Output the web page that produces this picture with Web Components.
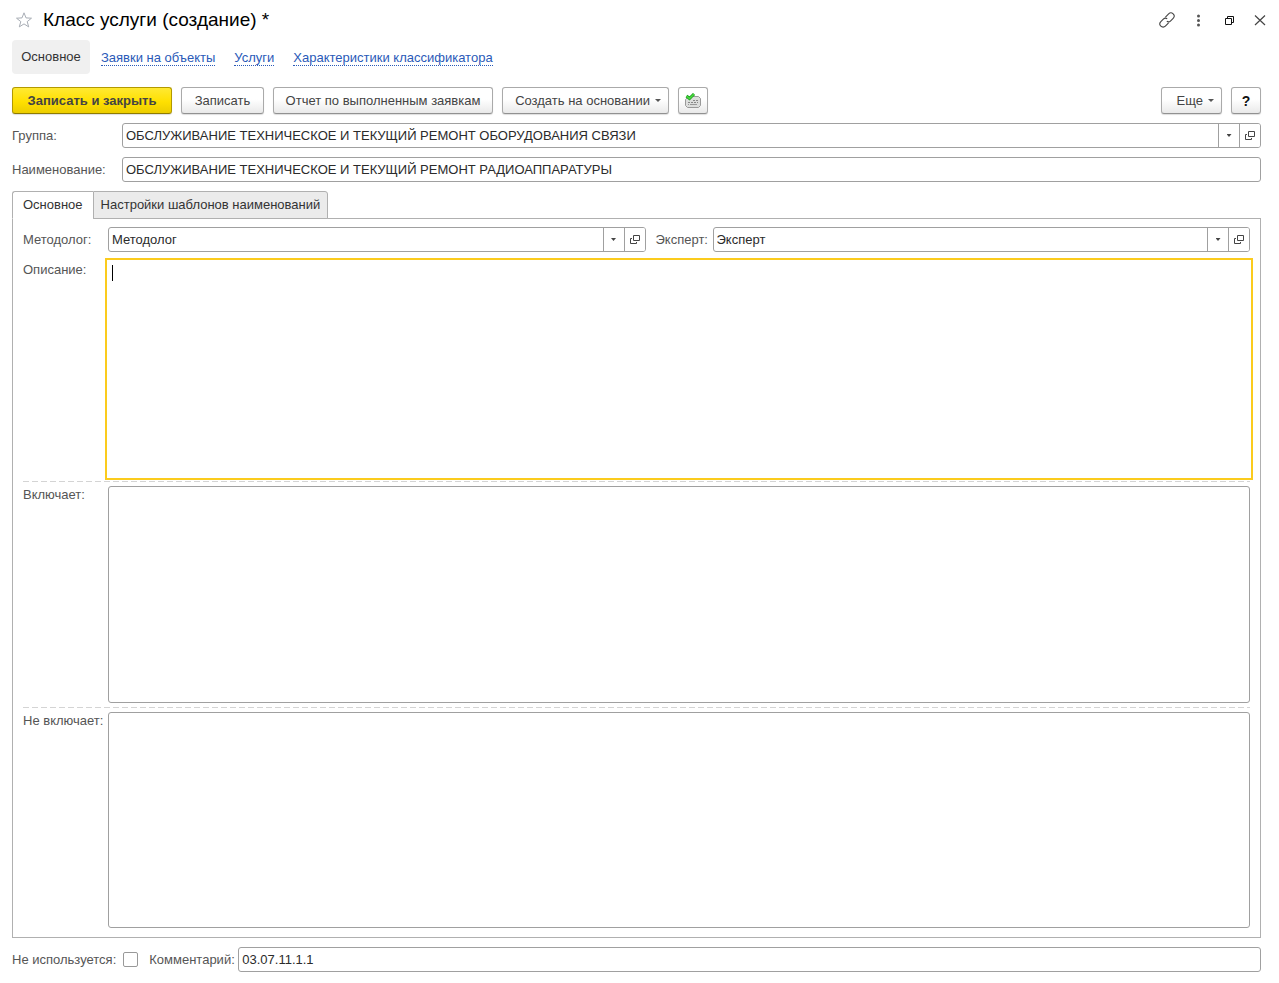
<!DOCTYPE html>
<html lang="ru">
<head>
<meta charset="utf-8">
<meta name="viewport" content="width=device-width, initial-scale=1">
<title>Класс услуги (создание)</title>
<style>
  html, body { margin: 0; background: #fff; }
  body { font: 13px/16px "Liberation Sans", Arial, sans-serif; color: #333; }
</style>
</head>
<body>
<service-form></service-form>
<script>
const base = `:host, *, *::before, *::after { box-sizing: border-box; }
  button, input, textarea { font: inherit; color: inherit; margin: 0; }`;

function define(name, html, setup) {
  const template = document.createElement('template');
  template.innerHTML = html;
  customElements.define(name, class extends HTMLElement {
    constructor() {
      super();
      this.attachShadow({ mode: 'open' }).append(template.content.cloneNode(true));
    }
    connectedCallback() { if (setup) setup(this, this.shadowRoot); }
  });
}

define('window-header', `<style>${base}
  :host { display: flex; align-items: center; height: 40px; padding-left: 4px; }
  h1 { flex: 1; margin: 0 0 0 11px; font-size: 19px; line-height: 24px; font-weight: 400; color: #000; }
  button { display: grid; place-items: center; width: 16px; height: 16px; padding: 0; border: 0; background: none; color: #444; }
  .favourite { color: #a8adb5; }
  svg { display: block; fill: none; stroke: currentColor; }
  .tools { display: flex; gap: 15px; margin-right: -7px; }
</style>
<button class="favourite" aria-label="В избранное"><svg width="16" height="16" viewBox="0 0 16 16"><path d="M8 .8l2 5.1 5.500.3-4.300 3.400 1.500 5.300L8 11.900l-4.700 3 1.500-5.300L.5 6.200 6 5.900z"/></svg></button>
<h1><slot></slot></h1>
<div class="tools">
  <button aria-label="Получить ссылку"><svg width="16" height="16" viewBox="0 0 16 16"><g transform="rotate(-45 8 8)" stroke-width="1.1"><path d="M7 11.200H2.500a3.200 3.200 0 0 1 0-6.400H6a3.200 3.200 0 0 1 3.100 2.400M9 4.800h4.500a3.200 3.200 0 0 1 0 6.400H10a3.200 3.200 0 0 1-3.100-2.400"/></g></svg></button>
  <button aria-label="Меню"><svg width="16" height="16" viewBox="0 0 16 16"><g fill="#555" stroke="none"><circle cx="8.500" cy="4" r="1.500"/><circle cx="8.500" cy="8.500" r="1.500"/><circle cx="8.500" cy="13" r="1.500"/></g></svg></button>
  <button aria-label="Развернуть"><svg width="16" height="16" viewBox="0 0 16 16"><path stroke="#111" d="M4.500 6.500h6v6h-6zM6.500 6V4.500h6v6H11"/></svg></button>
  <button aria-label="Закрыть"><svg width="16" height="16" viewBox="0 0 16 16"><path stroke-width="1.2" d="M3 3.500l10 9.500M13 3.500L3 13"/></svg></button>
</div>`);

define('section-nav', `<style>${base}
  :host { display: block; }
  nav { display: flex; align-items: center; gap: 19px; }
  span { width: 78px; padding: 9px 0; text-align: center; background: #f0f0f0; border-radius: 4px; margin-right: -8px; }
  a { margin-top: 2px; color: #2a5ab8; text-decoration: none; line-height: 14px; border-bottom: 1px dotted #2a5ab8; }
</style>
<nav><span>Основное</span><a href="#requests">Заявки на объекты</a><a href="#services">Услуги</a><a href="#features">Характеристики классификатора</a></nav>`);

define('tool-button', `<style>${base}
  :host { display: block; }
  button { display: flex; align-items: center; justify-content: center; gap: 5px; width: 100%; height: 27px; padding: 0;
    border: 1px solid #aaa; border-bottom-color: #919191; border-radius: 3px; white-space: nowrap; color: #444;
    background: linear-gradient(#fff 45%, #e9e9e9); box-shadow: 0 1px 1px #0002; }
  :host([primary]) button { font-weight: 700; border-color: #b29900; border-bottom-color: #8f7b00; background: linear-gradient(#ffe933, #ffe000 55%, #eccd00); }
  :host([square]) button { width: 30px; }
  :host([strong]) button { font-weight: 700; font-size: 14px; color: #111; }
  i { display: none; width: 6px; height: 3px; background: #555; clip-path: polygon(0 0, 100% 0, 50% 100%); }
  :host([menu]) button { justify-content: flex-end; padding-right: 7px; }
  :host([menu]) i { display: block; }
</style>
<button><slot></slot><i></i></button>`);

define('check-icon', `<style>:host, svg { display: block; }</style>
<svg width="16" height="16" viewBox="0 0 16 16"><path fill="#dcdddc" stroke="#999" d="M3.500 3.500h10l2 2v7l-2 2h-11l-2-2v-6z"/><path stroke="#888" stroke-dasharray="2 1" d="M8 7.500h6M3 9.500h10"/><path stroke="#999" stroke-dasharray="1 1 7 1" d="M3 11.500h10"/><path fill="none" stroke="#1e9b20" stroke-width="3" d="M1.500 3L4.500 5.500 9 1"/><path fill="none" stroke="#48dc3e" stroke-width="1.500" d="M1.500 3L4.500 5.500 9 1"/></svg>`);

define('command-bar', `<style>
  :host { display: flex; gap: 9px; }
  .space { flex: 1; }
  .save-close { width: 160px; }
  .save { width: 83px; }
  .report { width: 220px; }
  .create { width: 167px; }
  .more { width: 61px; }
</style>
<tool-button class="save-close" primary>Записать и закрыть</tool-button>
<tool-button class="save">Записать</tool-button>
<tool-button class="report">Отчет по выполненным заявкам</tool-button>
<tool-button class="create" menu>Создать на основании</tool-button>
<tool-button square><check-icon></check-icon></tool-button>
<div class="space"></div>
<tool-button class="more" menu>Еще</tool-button>
<tool-button square strong>?</tool-button>`);

define('text-field', `<style>${base}
  :host { display: flex; align-items: center; }
  label { flex: 0 0 var(--label, 110px); color: #555; white-space: nowrap; }
  .box { flex: 1; min-width: 0; display: flex; height: 25px; border: 1px solid #a0a0a0; border-radius: 3px; overflow: hidden; background: #fff; }
  input { flex: 1; min-width: 0; padding: 0 3px; border: 0; outline: 0; background: none; color: #2b2b2b; }
  button { display: none; place-items: center; width: 21px; padding: 0; border: 0; border-left: 1px solid #a0a0a0; background: #fff; }
  :host([reference]) button { display: grid; }
  i { width: 5px; height: 3px; background: #444; clip-path: polygon(0 0, 100% 0, 50% 100%); }
  svg { display: block; fill: none; stroke: #444; }
</style>
<label for="value"></label>
<div class="box"><input id="value" type="text">
  <button aria-label="Выбрать из списка"><i></i></button>
  <button aria-label="Открыть"><svg width="10" height="10" viewBox="0 0 10 10"><path d="M3.500.500h6v5h-6zM2 3.500H.500v5h6V7"/></svg></button>
</div>`, (host, root) => {
  root.querySelector('label').textContent = host.getAttribute('label');
  root.querySelector('input').value = host.getAttribute('value') || '';
});

define('text-area', `<style>${base}
  :host { display: flex; }
  label { flex: 0 0 85px; padding-top: 1px; color: #555; white-space: nowrap; }
  .box { flex: 1; min-width: 0; display: flex; position: relative; }
  textarea { flex: 1; min-width: 0; min-height: 60px; padding: 3px; border: 1px solid #a0a0a0; border-radius: 3px; outline: 0; resize: none; background: #fff; }
  :host([active]) textarea { border-color: transparent; border-radius: 0; outline: 2px solid #fbcb1d; outline-offset: 1px; }
  i { display: none; position: absolute; left: 4px; top: 4px; width: 1px; height: 16px; background: #000; }
  :host([active]) i { display: block; }
</style>
<label for="value"></label>
<div class="box"><textarea id="value"></textarea><i></i></div>`, (host, root) => {
  root.querySelector('label').textContent = host.getAttribute('label');
});

define('check-field', `<style>${base}
  :host { display: flex; align-items: center; gap: 7px; color: #555; white-space: nowrap; }
  input { appearance: none; width: 15px; height: 15px; border: 1px solid #999; border-radius: 2px; background: #fff; }
</style>
<label for="value"><slot></slot></label><input id="value" type="checkbox">`);

define('tab-strip', `<style>${base}
  :host { display: flex; position: relative; z-index: 1; margin-bottom: -1px; }
  button { height: 28px; padding: 0 7px; border: 1px solid #b0b0b0; border-radius: 0 3px 0 0; background: #ebebeb; white-space: nowrap; }
  button[aria-selected=true] { padding: 0 10px; border-bottom-color: #fff; border-right: 0; border-radius: 3px 0 0; background: #fff; }
</style>
<button role="tab" aria-selected="true">Основное</button><button role="tab" aria-selected="false">Настройки шаблонов наименований</button>`);

define('main-panel', `<style>${base}
  :host { display: flex; flex-direction: column; padding: 8px 10px 9px; border: 1px solid #b0b0b0; }
  .pair { display: flex; gap: 10px; margin-bottom: 9px; }
  .pair text-field { flex: 1 1 85px; --label: 85px; }
  .pair text-field + text-field { flex-basis: 57px; --label: 57px; }
  text-area { flex: 1; }
  hr { width: 100%; height: 1px; margin: 4px 0; border: 0; background: repeating-linear-gradient(90deg, #d4d4d4 0 6px, #fff 6px 9px); }
</style>
<div class="pair"><text-field reference label="Методолог:" value="Методолог"></text-field><text-field reference label="Эксперт:" value="Эксперт"></text-field></div>
<text-area active label="Описание:"></text-area>
<hr>
<text-area label="Включает:"></text-area>
<hr>
<text-area label="Не включает:"></text-area>`);

define('service-form', `<style>${base}
  :host { display: flex; flex-direction: column; min-height: 100vh; padding: 0 18px 11px 12px; }
  command-bar { margin: 13px 0 9px; }
  text-field { margin-bottom: 9px; }
  main-panel { flex: 1; }
  footer { display: flex; gap: 11px; margin-top: 9px; }
  footer text-field { flex: 1; margin: 0; --label: 89px; }
</style>
<window-header>Класс услуги (создание) *</window-header>
<section-nav></section-nav>
<command-bar></command-bar>
<text-field reference label="Группа:" value="ОБСЛУЖИВАНИЕ ТЕХНИЧЕСКОЕ И ТЕКУЩИЙ РЕМОНТ ОБОРУДОВАНИЯ СВЯЗИ"></text-field>
<text-field label="Наименование:" value="ОБСЛУЖИВАНИЕ ТЕХНИЧЕСКОЕ И ТЕКУЩИЙ РЕМОНТ РАДИОАППАРАТУРЫ"></text-field>
<tab-strip></tab-strip>
<main-panel></main-panel>
<footer><check-field>Не используется:</check-field><text-field label="Комментарий:" value="03.07.11.1.1"></text-field></footer>`);
</script>
</body>
</html>
